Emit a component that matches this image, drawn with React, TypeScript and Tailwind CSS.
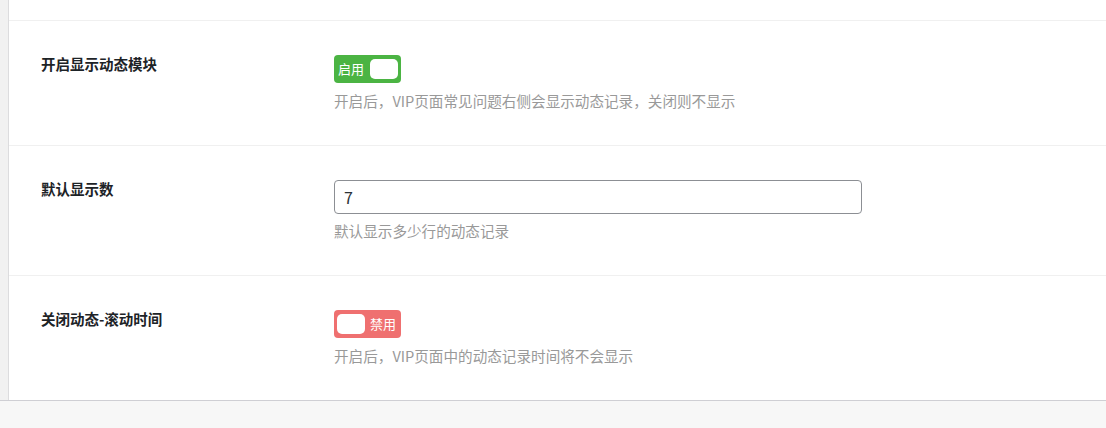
import React from "react";

const font = {
  fontFamily: '"Microsoft YaHei", "Noto Sans CJK SC", "Noto Sans", sans-serif',
};

function Toggle({ on }: { on: boolean }) {
  return (
    <div
      className={
        "flex h-[28px] w-[67px] items-center rounded-[4px] " +
        (on ? "bg-[#4bb443] pl-[4px] pr-[3px]" : "bg-[#ef7070] pl-[3px] pr-[5px]")
      }
    >
      {on ? (
        <>
          <span className="text-[13px] leading-[20px] text-white">启用</span>
          <span className="ml-auto h-[20px] w-[28px] rounded-[5px] bg-white" />
        </>
      ) : (
        <>
          <span className="h-[20px] w-[28px] rounded-[5px] bg-white" />
          <span className="ml-auto text-[13px] leading-[20px] text-white">禁用</span>
        </>
      )}
    </div>
  );
}

function Row({
  label,
  children,
  desc,
  gap,
  last,
}: {
  label: string;
  children: React.ReactNode;
  desc: string;
  gap: string;
  last?: boolean;
}) {
  return (
    <div className={"flex py-[34px] " + (last ? "" : "border-b border-[#f0f0f0]")}>
      <div className="-mt-[1px] w-[325px] shrink-0 pl-[32px] text-[14.5px] font-semibold leading-[20px] text-[#1d2327]">
        {label}
      </div>
      <div className="flex flex-col">
        {children}
        <div className={"text-[14.6px] leading-[20px] text-[#999999] " + gap}>{desc}</div>
      </div>
    </div>
  );
}

export default function App() {
  return (
    <div className="h-[428px] w-[1106px] overflow-hidden bg-[#f7f7f7]" style={font}>
      <div className="flex h-[401px] border-b border-[#cfcfd4] bg-white">
        <div className="w-[9px] shrink-0 border-r border-[#dcdcde] bg-[#f1f1f1]" />
        <div className="flex flex-1 flex-col">
          <div className="h-[21px] border-b border-[#f0f0f0]" />
          <Row
            label="开启显示动态模块"
            desc="开启后，VIP页面常见问题右侧会显示动态记录，关闭则不显示"
            gap="mt-[8px]"
          >
            <Toggle on />
          </Row>
          <Row label="默认显示数" desc="默认显示多少行的动态记录" gap="mt-[7px]">
            <div className="flex h-[34px] w-[528px] items-center rounded-[4px] border border-[#8c8f94] px-[9px] text-[16px] text-[#2c3338]">
              7
            </div>
          </Row>
          <Row
            label="关闭动态-滚动时间"
            desc="开启后，VIP页面中的动态记录时间将不会显示"
            gap="mt-[8px]"
            last
          >
            <Toggle on={false} />
          </Row>
        </div>
      </div>
    </div>
  );
}
